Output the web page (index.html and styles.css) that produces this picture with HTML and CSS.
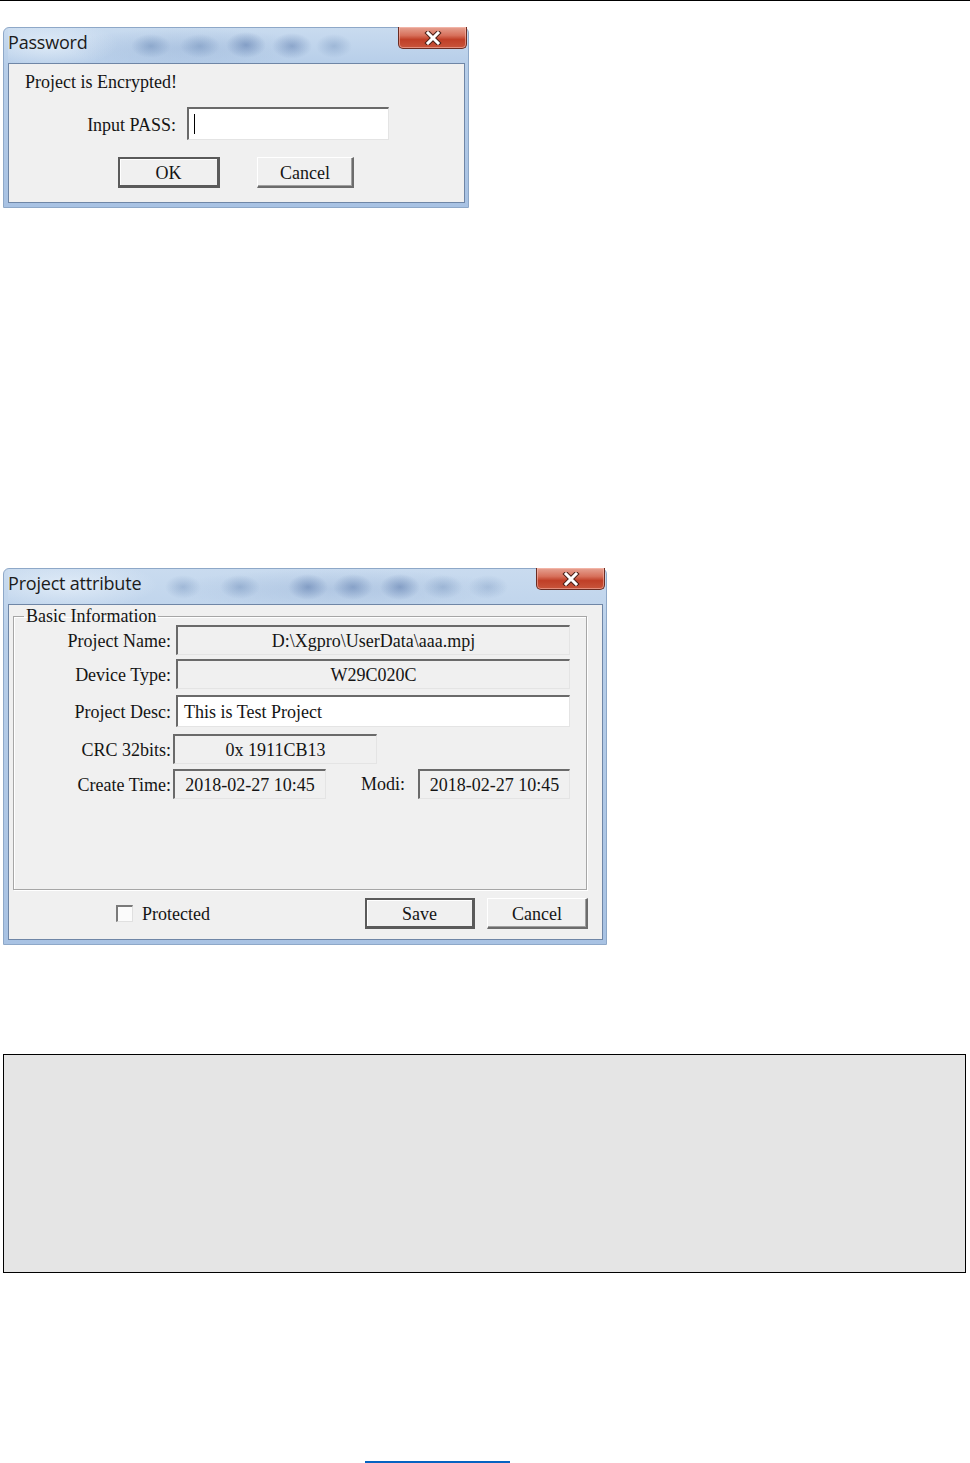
FILE: index.html
```html
<!DOCTYPE html>
<html lang="en">
<head>
<meta charset="utf-8">
<title>Project dialogs</title>
<link rel="stylesheet" href="styles.css">
</head>
<body>
<div class="page">
  <div class="topline"></div>

  <div class="window pw">
    <div class="titlebar pw-bar">
      <span class="title">Password</span>
      <span class="close" aria-label="Close">
        <svg width="20" height="14" viewBox="0 0 20 14">
          <path d="M5 2 L15 12 M15 2 L5 12" stroke="#4a2018" stroke-width="5" stroke-linecap="square" fill="none"/>
          <path d="M5 2 L15 12 M15 2 L5 12" stroke="#ffffff" stroke-width="3" stroke-linecap="square" fill="none"/>
        </svg>
      </span>
    </div>
    <div class="client pw-client">
      <p class="msg">Project is Encrypted!</p>
      <div class="pass-row">
        <span class="pass-label">Input PASS:</span>
        <div class="field white pass-input"><span class="caret"></span></div>
      </div>
      <div class="pw-buttons">
        <button class="btn default ok">OK</button>
        <button class="btn cancel-pw">Cancel</button>
      </div>
    </div>
  </div>

  <div class="window pa">
    <div class="titlebar pa-bar">
      <span class="title">Project attribute</span>
      <span class="close" aria-label="Close">
        <svg width="20" height="14" viewBox="0 0 20 14">
          <path d="M5 2 L15 12 M15 2 L5 12" stroke="#4a2018" stroke-width="5" stroke-linecap="square" fill="none"/>
          <path d="M5 2 L15 12 M15 2 L5 12" stroke="#ffffff" stroke-width="3" stroke-linecap="square" fill="none"/>
        </svg>
      </span>
    </div>
    <div class="client pa-client">
      <fieldset class="group">
        <legend>Basic Information</legend>
        <div class="row r1">
          <span class="lbl">Project Name:</span>
          <div class="field ro wide center">D:\Xgpro\UserData\aaa.mpj</div>
        </div>
        <div class="row r2">
          <span class="lbl">Device Type:</span>
          <div class="field ro wide center">W29C020C</div>
        </div>
        <div class="row r3">
          <span class="lbl">Project Desc:</span>
          <div class="field white wide desc">This is Test Project</div>
        </div>
        <div class="row r4">
          <span class="lbl">CRC 32bits:</span>
          <div class="field ro crc center">0x 1911CB13</div>
        </div>
        <div class="row r5">
          <span class="lbl">Create Time:</span>
          <div class="field ro time center">2018-02-27 10:45</div>
          <span class="modi">Modi:</span>
          <div class="field ro time2 center">2018-02-27 10:45</div>
        </div>
      </fieldset>
      <div class="pa-bottom">
        <span class="check"></span>
        <span class="check-label">Protected</span>
        <button class="btn default save">Save</button>
        <button class="btn cancel-pa">Cancel</button>
      </div>
    </div>
  </div>

  <div class="note"></div>

  <div class="linkline"></div>
</div>
</body>
</html>
```

FILE: styles.css
```css
html, body {
  margin: 0;
  padding: 0;
  background: #ffffff;
}

body {
  font-family: "Liberation Serif", "Times New Roman", serif;
  font-size: 18px;
  color: #151515;
}

.page {
  width: 970px;
  height: 1463px;
  overflow: hidden;
}

.topline {
  height: 1px;
  background: #000000;
}

/* ---------- window frame ---------- */
.window {
  box-sizing: border-box;
  margin-left: 3px;
  border: 1px solid #8ea8c8;
  border-radius: 6px 6px 0 0;
  padding: 0 3px 4px 4px;
  display: flex;
  flex-direction: column;
  background: linear-gradient(180deg, #c9dbef 0%, #b7cee9 20%, #a8c2e3 100%);
}

.window.pw {
  margin-top: 26px;
  width: 466px;
  height: 181px;
}

.window.pa {
  margin-top: 360px;
  width: 604px;
  height: 377px;
}

.titlebar {
  height: 35px;
  flex: none;
  display: flex;
  align-items: flex-start;
  margin-right: -2px;
}

.pw-bar {
  background:
    radial-gradient(ellipse 20px 12px at 143px 18px, rgba(95, 128, 175, 0.45), rgba(95, 128, 175, 0) 100%),
    radial-gradient(ellipse 20px 12px at 192px 18px, rgba(95, 128, 175, 0.4), rgba(95, 128, 175, 0) 100%),
    radial-gradient(ellipse 20px 13px at 238px 17px, rgba(80, 112, 165, 0.5), rgba(80, 112, 165, 0) 100%),
    radial-gradient(ellipse 20px 13px at 284px 18px, rgba(80, 112, 165, 0.45), rgba(80, 112, 165, 0) 100%),
    radial-gradient(ellipse 18px 12px at 326px 18px, rgba(95, 128, 175, 0.35), rgba(95, 128, 175, 0) 100%),
    radial-gradient(ellipse 120px 20px at 180px 20px, rgba(120, 150, 195, 0.25), rgba(120, 150, 195, 0) 100%),
    radial-gradient(ellipse 70px 24px at 40px 16px, rgba(232, 241, 250, 0.75), rgba(232, 241, 250, 0) 100%);
}

.pa-bar {
  background:
    radial-gradient(ellipse 18px 12px at 175px 18px, rgba(95, 128, 175, 0.35), rgba(95, 128, 175, 0) 100%),
    radial-gradient(ellipse 20px 12px at 232px 18px, rgba(95, 128, 175, 0.4), rgba(95, 128, 175, 0) 100%),
    radial-gradient(ellipse 20px 13px at 300px 18px, rgba(80, 112, 165, 0.5), rgba(80, 112, 165, 0) 100%),
    radial-gradient(ellipse 20px 13px at 345px 18px, rgba(80, 112, 165, 0.45), rgba(80, 112, 165, 0) 100%),
    radial-gradient(ellipse 20px 13px at 392px 18px, rgba(80, 112, 165, 0.5), rgba(80, 112, 165, 0) 100%),
    radial-gradient(ellipse 20px 12px at 435px 18px, rgba(95, 128, 175, 0.35), rgba(95, 128, 175, 0) 100%),
    radial-gradient(ellipse 20px 12px at 480px 18px, rgba(95, 128, 175, 0.28), rgba(95, 128, 175, 0) 100%),
    radial-gradient(ellipse 170px 20px at 330px 20px, rgba(120, 150, 195, 0.25), rgba(120, 150, 195, 0) 100%),
    radial-gradient(ellipse 90px 24px at 60px 16px, rgba(232, 241, 250, 0.75), rgba(232, 241, 250, 0) 100%);
}

.title {
  font-family: "Open Sans", "Noto Sans", "DejaVu Sans", sans-serif;
  font-size: 18px;
  line-height: 22px;
  padding-top: 3px;
  color: #1b1b1b;
  letter-spacing: -0.2px;
}

.close {
  margin-left: auto;
  margin-top: -1px;
  width: 69px;
  height: 22px;
  box-sizing: border-box;
  border: 1px solid #6a2c22;
  border-top: none;
  border-radius: 0 0 5px 5px;
  background: linear-gradient(180deg, #e6a393 0%, #d7705b 40%, #c03f27 60%, #c8553b 100%);
  box-shadow: inset 0 0 0 1px rgba(255, 200, 190, 0.5);
  display: flex;
  align-items: center;
  justify-content: center;
}

.client {
  flex: 1;
  box-sizing: border-box;
  border: 1px solid #6f86a6;
  background: #f0f0f0;
  display: flex;
  flex-direction: column;
}

/* ---------- generic controls ---------- */
.field {
  box-sizing: border-box;
  height: 30px;
  border-top: 2px solid #6a6a6a;
  border-left: 2px solid #6a6a6a;
  border-right: 1px solid #e4e4e4;
  border-bottom: 1px solid #e4e4e4;
  background: #f0f0f0;
  display: flex;
  align-items: center;
  line-height: 1;
  white-space: nowrap;
}

.field.white {
  background: #ffffff;
}

.field.center {
  justify-content: center;
}

.btn {
  box-sizing: border-box;
  height: 31px;
  margin: 0;
  padding: 2px 0 0;
  font-family: "Liberation Serif", "Times New Roman", serif;
  font-size: 18px;
  color: #151515;
  background: #f0f0f0;
  border-top: 1px solid #ffffff;
  border-left: 1px solid #ffffff;
  border-right: 2px solid #6c6c6c;
  border-bottom: 2px solid #6c6c6c;
  box-shadow: inset -1px -1px 0 #a0a0a0;
}

.btn.default {
  border: 2px solid #5a5a5a;
  border-right-width: 3px;
  border-bottom-width: 3px;
  box-shadow: inset 1px 1px 0 #ffffff;
}

/* ---------- password dialog ---------- */
.msg {
  margin: 0;
  padding: 7px 0 0 16px;
  line-height: 22px;
}

.pass-row {
  margin-top: 14px;
  display: flex;
  align-items: center;
}

.pass-label {
  width: 167px;
  text-align: right;
  padding: 3px 11px 0 0;
  box-sizing: content-box;
}

.pass-input {
  width: 202px;
  height: 33px;
  padding-left: 5px;
}

.caret {
  width: 1px;
  height: 20px;
  background: #000000;
}

.pw-buttons {
  margin-top: 17px;
  padding-left: 109px;
  display: flex;
  gap: 37px;
}

.ok {
  width: 102px;
}

.cancel-pw {
  width: 97px;
}

/* ---------- project attribute dialog ---------- */
.group {
  margin: 2px 15px 0 4px;
  padding: 0;
  height: 283px;
  box-sizing: border-box;
  border: 1px solid #a6a6a6;
  box-shadow: inset 1px 1px 0 #ffffff, 1px 1px 0 #ffffff;
  display: flex;
  flex-direction: column;
}

.group legend {
  margin-left: 10px;
  padding: 0 2px;
  line-height: 18px;
}

.row {
  display: flex;
  align-items: center;
}

.lbl {
  width: 157px;
  text-align: right;
  white-space: nowrap;
  padding-top: 2px;
}

.r1 .field,
.r2 .field {
  margin-left: 5px;
}

.r2 { margin-top: 4px; }
.r3 { margin-top: 6px; }
.r4 { margin-top: 7px; }
.r5 { margin-top: 5px; }

.field.wide {
  width: 394px;
}

.field.desc {
  margin-left: 5px;
  height: 32px;
  padding-left: 6px;
}

.field.crc {
  margin-left: 2px;
  width: 204px;
}

.field.time {
  margin-left: 2px;
  width: 153px;
}

.modi {
  margin-left: 35px;
  width: 57px;
}

.field.time2 {
  width: 152px;
}

.pa-bottom {
  margin-top: 8px;
  padding: 0 14px 0 107px;
  display: flex;
  align-items: center;
}

.check {
  width: 17px;
  height: 17px;
  box-sizing: border-box;
  border-top: 2px solid #7a7a7a;
  border-left: 2px solid #7a7a7a;
  border-right: 1px solid #e0e0e0;
  border-bottom: 1px solid #e0e0e0;
  background: #fbfbfb;
}

.check-label {
  margin-left: 9px;
  padding-top: 2px;
}

.save {
  margin-left: auto;
  width: 110px;
}

.cancel-pa {
  margin-left: 12px;
  width: 101px;
}

/* ---------- grey note box ---------- */
.note {
  margin: 109px 0 0 3px;
  width: 963px;
  height: 219px;
  box-sizing: border-box;
  border: 1px solid #000000;
  background: #e5e5e5;
}

/* ---------- link underline fragment ---------- */
.linkline {
  margin: 188px 0 0 365px;
  width: 145px;
  height: 0;
  border-bottom: 2px solid #0563c1;
}
```
